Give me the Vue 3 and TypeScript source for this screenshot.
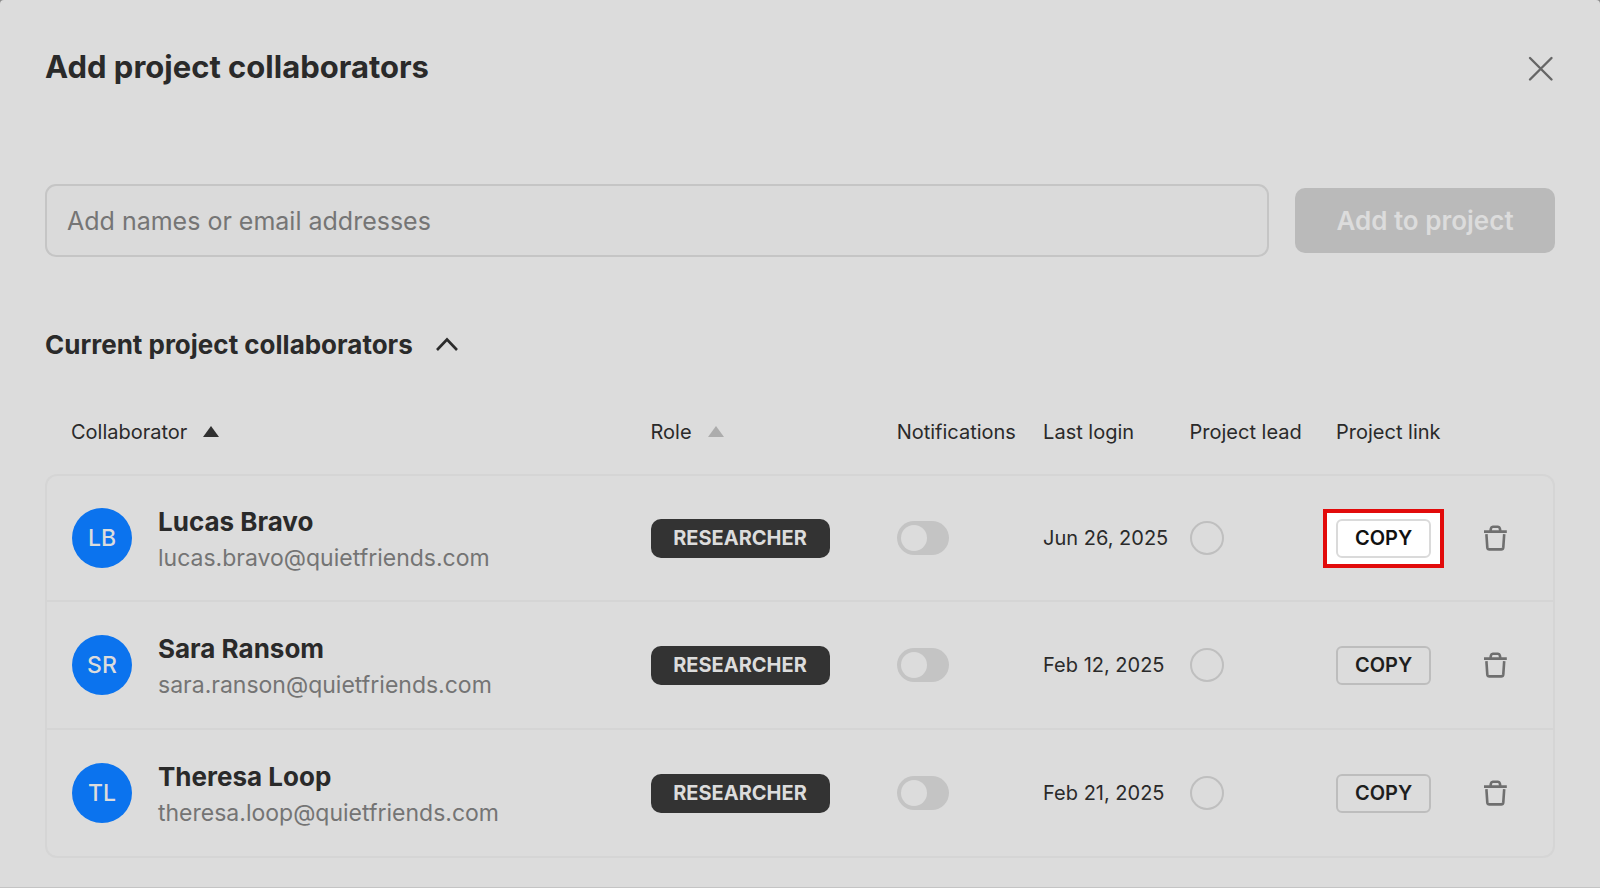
<script setup lang="ts">
import { ref } from 'vue'

interface Collaborator {
  initials: string
  name: string
  email: string
  role: string
  lastLogin: string
  notify: boolean
  highlighted: boolean
}

const query = ref('')
const lead = ref('')
const expanded = ref(true)
const collaborators = ref<Collaborator[]>([
  { initials: 'LB', name: 'Lucas Bravo', email: 'lucas.bravo@quietfriends.com', role: 'RESEARCHER', lastLogin: 'Jun 26, 2025', notify: false, highlighted: true },
  { initials: 'SR', name: 'Sara Ransom', email: 'sara.ranson@quietfriends.com', role: 'RESEARCHER', lastLogin: 'Feb 12, 2025', notify: false, highlighted: false },
  { initials: 'TL', name: 'Theresa Loop', email: 'theresa.loop@quietfriends.com', role: 'RESEARCHER', lastLogin: 'Feb 21, 2025', notify: false, highlighted: false },
])
</script>

<template>
  <main class="dialog" role="dialog" aria-labelledby="dialog-title">
    <header class="top">
      <h1 id="dialog-title">Add project collaborators</h1>
      <button class="plain close" type="button" aria-label="Close">
        <svg width="28" height="28" viewBox="0 0 28 28" fill="none" stroke="#666" stroke-width="2.4" stroke-linecap="round">
          <path d="M3 4 24.500 25.500M24.500 4 3 25.500" />
        </svg>
      </button>
    </header>

    <form class="invite" @submit.prevent>
      <input v-model="query" type="text" placeholder="Add names or email addresses" aria-label="Add names or email addresses" />
      <button type="submit" disabled>Add to project</button>
    </form>

    <h2>
      <button class="plain section" type="button" :aria-expanded="expanded" @click="expanded = !expanded">
        Current project collaborators
        <svg width="24" height="24" viewBox="0 0 24 24" fill="none" stroke="#2c2c2c" stroke-width="2.6">
          <path d="M2 18 12 7.500 22 18" />
        </svg>
      </button>
    </h2>

    <table v-if="expanded">
      <colgroup>
        <col class="c-person" /><col class="c-role" /><col class="c-std" /><col class="c-std" /><col class="c-std" /><col class="c-std" /><col class="c-remove" />
      </colgroup>
      <thead>
        <tr>
          <th scope="col">
            <button class="plain sort" type="button">
              Collaborator
              <svg width="16" height="11" viewBox="0 0 16 11"><path d="M8 0 16 11H0z" fill="#303030" /></svg>
            </button>
          </th>
          <th scope="col">
            <button class="plain sort" type="button">
              Role
              <svg width="16" height="11" viewBox="0 0 16 11"><path d="M8 0 16 11H0z" fill="#acacac" /></svg>
            </button>
          </th>
          <th scope="col">Notifications</th>
          <th scope="col">Last login</th>
          <th scope="col">Project lead</th>
          <th scope="col">Project link</th>
          <td></td>
        </tr>
      </thead>
      <tbody>
        <tr v-for="c in collaborators" :key="c.email">
          <td>
            <div class="person">
              <span class="avatar">{{ c.initials }}</span>
              <div class="who">
                <div class="name">{{ c.name }}</div>
                <div class="email">{{ c.email }}</div>
              </div>
            </div>
          </td>
          <td><span class="badge">{{ c.role }}</span></td>
          <td><input v-model="c.notify" class="toggle" type="checkbox" role="switch" :aria-label="`Notifications for ${c.name}`" /></td>
          <td>{{ c.lastLogin }}</td>
          <td><input v-model="lead" class="radio" type="radio" name="lead" :value="c.email" :aria-label="`Make ${c.name} project lead`" /></td>
          <td>
            <div :class="{ callout: c.highlighted }"><button class="copy" type="button">COPY</button></div>
          </td>
          <td>
            <button class="plain trash" type="button" :aria-label="`Remove ${c.name}`">
              <svg width="24" height="28" viewBox="0 0 24 28" fill="none" stroke="#6f6f6f" stroke-width="2.6">
                <path d="M1 7.600H23.800M7.400 7.300 8 4.300Q8.300 2.800 9.800 2.800H15Q16.500 2.800 16.800 4.300L17.400 7.300M3.400 10.200 4.300 23.400Q4.500 25.400 6.400 25.400H18.200Q20.100 25.400 20.300 23.400L21.200 10.200" />
              </svg>
            </button>
          </td>
        </tr>
      </tbody>
    </table>
  </main>
</template>

<style>
html {
  background: #8a8a8a;
}
</style>

<style scoped>
* {
  box-sizing: border-box;
}
.dialog {
  min-height: 100vh;
  padding: 44px 45px 26px;
  border-bottom: 1px solid #c4c4c4;
  border-radius: 4px 4px 0 0;
  background: #dcdcdc;
  color: #2a2a2a;
  font-family: Inter, "Liberation Sans", sans-serif;
  font-size: 20px;
}
button,
input {
  font: inherit;
  margin: 0;
}
.plain {
  display: block;
  padding: 0;
  border: 0;
  background: none;
  color: inherit;
  cursor: pointer;
}
svg {
  display: block;
  flex: none;
}
.top {
  display: flex;
  align-items: center;
  justify-content: space-between;
  height: 48px;
}
h1,
h2 {
  margin: 0;
}
h1 {
  padding-bottom: 3px;
  font-size: 31px;
  font-weight: 700;
}
.invite {
  display: flex;
  align-items: center;
  gap: 26px;
  margin-top: 92px;
}
.invite input {
  flex: 1;
  min-width: 0;
  height: 73px;
  padding: 0 20px;
  border: 2px solid #c5c5c5;
  border-radius: 11px;
  background: #dadada;
  font-size: 25px;
}
.invite input::placeholder {
  color: #757575;
  opacity: 1;
}
.invite button {
  height: 65px;
  padding: 0;
  width: 260px;
  border: 0;
  border-radius: 10px;
  background: #bababa;
  color: #dcdcdc;
  font-size: 26px;
  font-weight: 600;
}
h2 {
  margin-top: 67px;
  font-size: 26px;
}
.section {
  display: flex;
  align-items: center;
  gap: 22px;
  height: 40px;
  font-weight: 700;
}
table {
  width: 100%;
  margin-top: 25px;
  table-layout: fixed;
  border-collapse: separate;
  border-spacing: 0;
}
.c-person {
  width: 40.1%;
}
.c-role {
  width: 16.3%;
}
.c-std {
  width: 9.7%;
}
.c-remove {
  width: 4.8%;
}
th,
td {
  padding: 0;
  text-align: left;
  font-weight: 400;
  white-space: nowrap;
}
thead th {
  height: 85px;
}
th:first-child {
  padding-left: 26px;
}
.sort {
  display: flex;
  align-items: center;
  gap: 16px;
}
tbody td {
  height: 128px;
  border-bottom: 2px solid #d5d5d5;
}
tbody tr:first-child td {
  border-top: 2px solid #d5d5d5;
}
tbody td:first-child {
  padding-left: 25px;
  border-left: 2px solid #d5d5d5;
}
tbody td:last-child {
  border-right: 2px solid #d5d5d5;
}
tbody tr:first-child td:first-child {
  border-top-left-radius: 12px;
}
tbody tr:first-child td:last-child {
  border-top-right-radius: 12px;
}
tbody tr:last-child td:first-child {
  border-bottom-left-radius: 12px;
}
tbody tr:last-child td:last-child {
  border-bottom-right-radius: 12px;
}
.person {
  display: flex;
  align-items: center;
  gap: 26px;
}
.avatar {
  display: grid;
  place-items: center;
  width: 60px;
  height: 60px;
  border-radius: 50%;
  background: #0b73ee;
  color: #dcdcdc;
  font-size: 23px;
  font-weight: 500;
}
.who {
  padding-top: 4px;
  line-height: 37px;
}
.name {
  font-size: 26px;
  font-weight: 700;
}
.email {
  color: #747474;
  font-size: 23px;
}
.badge {
  display: grid;
  place-items: center;
  width: 179px;
  height: 39px;
  border-radius: 10px;
  background: #333;
  color: #dcdcdc;
  font-weight: 700;
}
.toggle,
.radio {
  display: block;
  appearance: none;
  cursor: pointer;
}
.toggle {
  width: 52px;
  height: 34px;
  padding: 4px;
  border-radius: 17px;
  background: #c4c4c4;
}
.toggle::before {
  content: "";
  display: block;
  width: 26px;
  height: 26px;
  border-radius: 50%;
  background: #dcdcdc;
}
.toggle:checked::before {
  margin-left: auto;
}
.radio {
  width: 34px;
  height: 34px;
  border: 2px solid #bfbfbf;
  border-radius: 50%;
}
.radio:checked {
  border-width: 10px;
  border-color: #0b73ee;
}
.copy {
  display: block;
  width: 95px;
  height: 39px;
  padding: 0;
  border: 2px solid #bdbdbd;
  border-radius: 6px;
  background: transparent;
  color: #1e1e1e;
  font-weight: 600;
  cursor: pointer;
}
.callout {
  width: max-content;
  margin: -10px -13px;
  padding: 6px 9px;
  border: 4px solid #e20b0b;
  background: #fff;
}
.callout .copy {
  border-color: #dadada;
  color: #111;
}
</style>
